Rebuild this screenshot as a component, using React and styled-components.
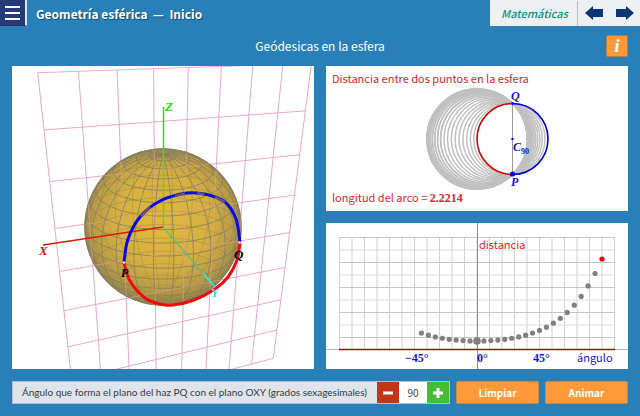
import React, { useState } from "react";
import styled, { createGlobalStyle } from "styled-components";

const sans = '"Noto Sans CJK SC", "Noto Sans", sans-serif';
const serif = '"Liberation Serif", "Times New Roman", serif';

const GlobalStyle = createGlobalStyle`
  * { box-sizing: border-box; }
  body { margin: 0; background: #2980b9; font-family: ${sans}; }
  button, input { font-family: inherit; margin: 0; padding: 0; border: 0; border-radius: 0; }
`;

const Page = styled.div`
  display: flex;
  flex-direction: column;
  background: #2980b9;
`;

const TopBar = styled.header`
  display: flex;
  align-items: stretch;
  height: 26px;
`;

const MenuButton = styled.button`
  display: grid;
  place-items: center;
  width: 27px;
  background: #253a78;
  border-right: 2px solid #d5e6f2;
  border-bottom: 1px solid #1d2f66;
`;

const PageTitle = styled.h1`
  flex: 1;
  margin: 0;
  padding-left: 9px;
  color: #fff;
  font-size: 12px;
  line-height: 28px;
  font-weight: 700;
  white-space: pre;
  text-shadow: 1px 1px 1px #174a6e;
`;

const Navigation = styled.nav`
  display: flex;
  align-items: center;
  width: 150px;
  padding-left: 11px;
  background: #ecf0f1;
`;

const SubjectLink = styled.a`
  flex: 1;
  color: #149184;
  font-size: 11px;
  line-height: 24px;
  font-style: italic;
  font-weight: 500;
  text-decoration: none;
`;

const NavButtons = styled.div`
  display: flex;
  gap: 12px;
  padding: 2px 6px 2px 6px;
  border-left: 1px solid #a3c3e6;
`;

const NavButton = styled.button`
  display: grid;
  place-items: center;
  width: 19px;
  height: 21px;
  background: transparent;
`;

const SceneHeader = styled.div`
  display: grid;
  grid-template-columns: 22px 1fr 22px;
  align-items: center;
  height: 40px;
  padding: 0 12px;
`;

const SceneTitle = styled.h2`
  grid-column: 2;
  margin: 0;
  color: #fff;
  font-size: 12px;
  line-height: 20px;
  font-weight: 400;
  text-align: center;
`;

const InfoButton = styled.button`
  height: 22px;
  background: #ff993a;
  border: 1px solid #b98046;
  border-radius: 2px;
  color: #fff;
  font: italic 700 18px/18px ${serif};
`;

const Scenes = styled.main`
  display: grid;
  grid-template-columns: 1fr 1fr;
  gap: 12px;
  padding: 0 12px;
`;

const Column = styled.div`
  display: flex;
  flex-direction: column;
  gap: 12px;
`;

const Drawing = styled.svg`
  display: block;
  width: 100%;
  background: #fff;
`;

const Controls = styled.form`
  display: grid;
  grid-template-columns: minmax(0, 1fr) 83px 83px;
  gap: 6px;
  padding: 12px 12px;
`;

const Stepper = styled.div`
  display: flex;
  height: 23px;
  border: 1px solid #aebfce;
`;

const StepperLabel = styled.label`
  flex: 1;
  padding-left: 9px;
  background: #dfe4ea;
  color: #343b42;
  font-family: Lato, ${sans};
  font-size: 10px;
  line-height: 20px;
  white-space: nowrap;
`;

const StepButton = styled.button`
  display: grid;
  place-items: center;
  width: 22px;
  background: ${(p) => p.$color};
`;

const StepInput = styled.input`
  width: 28px;
  background: #fff;
  color: #444;
  font-size: 10px;
  text-align: center;
`;

const ActionButton = styled.button`
  height: 23px;
  background: #ff993a;
  border: 1px solid #c08a50;
  border-radius: 2px;
  color: #fff;
  font-size: 10px;
  line-height: 20px;
  font-weight: 700;
`;

const SansText = styled.text`
  font-family: ${sans};
  font-size: ${(p) => p.$size || 12}px;
  fill: ${(p) => p.$color};
`;

const SerifText = styled.text`
  font-family: ${serif};
  font-size: ${(p) => p.$size || 12}px;
  font-weight: 700;
  font-style: ${(p) => (p.$italic ? "italic" : "normal")};
  fill: ${(p) => p.$color};
`;

const SerifSpan = styled.tspan`
  font-family: ${serif};
  font-size: 12px;
  font-weight: 700;
`;

const range = (n) => Array.from({ length: n }, (_, i) => i);
const rad = (deg) => (deg * Math.PI) / 180;
const toPath = (pts) => "M" + pts.map((p) => p[0].toFixed(1) + " " + p[1].toFixed(1)).join("L");

/* Perspective mapping of the unit square onto the reference plane. */
const planePoint = (() => {
  const [a, b, c, d] = [[37.7, 72.7], [311.5, 63.3], [273.3, 358.3], [75, 411]];
  const sx = a[0] - b[0] + c[0] - d[0];
  const sy = a[1] - b[1] + c[1] - d[1];
  const dx1 = b[0] - c[0], dx2 = d[0] - c[0];
  const dy1 = b[1] - c[1], dy2 = d[1] - c[1];
  const det = dx1 * dy2 - dx2 * dy1;
  const g = (sx * dy2 - dx2 * sy) / det;
  const h = (dx1 * sy - sx * dy1) / det;
  return (u, v) => {
    const w = g * u + h * v + 1;
    return [
      ((b[0] - a[0] + g * b[0]) * u + (d[0] - a[0] + h * d[0]) * v + a[0]) / w,
      ((b[1] - a[1] + g * b[1]) * u + (d[1] - a[1] + h * d[1]) * v + a[1]) / w,
    ];
  };
})();

const planeLines = range(9)
  .map((i) => toPath([planePoint(i / 8, 0), planePoint(i / 8, 1)]) + toPath([planePoint(0, i / 8), planePoint(1, i / 8)]))
  .join("");

/* Projects a sphere point and reports whether it faces the viewer. */
const project = (lat, lon) => {
  const turn = rad(lon);
  const x = Math.cos(rad(lat)) * Math.sin(turn);
  const depth = Math.cos(rad(lat)) * Math.cos(turn);
  const z = Math.sin(rad(lat));
  const e = rad(22);
  return [163 + 78 * x, 227 - 78 * (z * Math.cos(e) - depth * Math.sin(e)), depth * Math.cos(e) + z * Math.sin(e)];
};

const wire = (front) => {
  const out = [];
  const add = (p, q) => {
    if (p[2] + q[2] >= 0 === front) out.push(toPath([p, q]));
  };
  for (let lat = -80; lat <= 80; lat += 10)
    for (let lon = 8; lon < 368; lon += 15) add(project(lat, lon), project(lat, lon + 15));
  for (let lon = 8; lon < 368; lon += 15)
    for (let lat = -90; lat < 90; lat += 10) add(project(lat, lon), project(lat + 10, lon));
  return out.join("");
};
const frontWire = wire(true);
const backWire = wire(false);

const smooth = (pts) => {
  let d = `M${pts[0]}`;
  for (let i = 0; i < pts.length - 1; i++) {
    const p0 = pts[i - 1] || pts[i], p1 = pts[i], p2 = pts[i + 1], p3 = pts[i + 2] || p2;
    d += `C${p1[0] + (p2[0] - p0[0]) / 6} ${p1[1] + (p2[1] - p0[1]) / 6} ${p2[0] - (p3[0] - p1[0]) / 6} ${p2[1] - (p3[1] - p1[1]) / 6} ${p2[0]} ${p2[1]}`;
  }
  return d;
};
const blueArc = smooth([[124, 262], [128, 239], [140, 217], [160, 201], [187, 193], [207, 194.5], [225, 202], [236, 219], [240, 242]]);
const redArc = smooth([[240, 243], [237, 260], [228, 277], [215, 289], [194, 300], [173, 305], [160, 304], [145, 298], [130, 281], [124, 263]]);

function SphereScene() {
  return (
    <Drawing viewBox="12 66 302 303" role="img" aria-label="Esfera">
      <defs>
        <radialGradient id="gold" cx="0.5" cy="0.46" r="0.54">
          <stop offset="0" stopColor="#e0b93c" />
          <stop offset="0.55" stopColor="#d6b040" />
          <stop offset="0.82" stopColor="#b99d46" />
          <stop offset="1" stopColor="#92834a" />
        </radialGradient>
        <clipPath id="ball"><circle cx="163" cy="227" r="78" /></clipPath>
      </defs>
      <path d={planeLines} fill="none" stroke="#e9a8cd" />
      <circle cx="163" cy="227" r="78.5" fill="url(#gold)" />
      <path d={backWire} fill="none" stroke="#9a8440" strokeWidth="0.7" opacity="0.6" />
      <path d={frontWire} fill="none" stroke="#857d62" strokeWidth="0.8" />
      <circle cx="163" cy="227" r="78" fill="none" stroke="#85805f" strokeWidth="1.6" />
      <path d={planeLines} fill="none" stroke="#e8a08c" clipPath="url(#ball)" opacity="0.6" />
      <path d="M163 227L43 245" stroke="#d61a08" strokeWidth="1.3" />
      <path d="M163 227L203 273" stroke="#4fbf8d" strokeWidth="1.2" />
      <path d="M163.5 227V148" stroke="#62d31c" strokeWidth="1.4" />
      <path d="M163.5 149V107" stroke="#19e619" strokeWidth="1.5" />
      <path d={blueArc} fill="none" stroke="#0a0ae6" strokeWidth="3" />
      <path d="M141 216L150 207M175 196L185 193.5M197 193L204 194.5M215 197L225 202" stroke="#655274" strokeWidth="2.6" />
      <path d={redArc} fill="none" stroke="#f40808" strokeWidth="3" />
      <path d="M203 273L215 287" stroke="#20eee0" strokeWidth="1.8" />
      <circle cx="124" cy="262.5" r="1.3" fill="#e8d8f0" />
      <circle cx="239.5" cy="242.5" r="1.3" fill="#e8d8f0" />
      <SerifText x="165" y="111" $italic $color="#19dc19" $size={13}>Z</SerifText>
      <SerifText x="39" y="255" $italic $color="#e01414" $size={13}>X</SerifText>
      <SerifText x="211" y="297" $italic $color="#17e8e8" $size={12}>Y</SerifText>
      <SerifText x="121" y="277" $italic $color="#000" $size={12}>P</SerifText>
      <SerifText x="234" y="259" $italic $color="#000" $size={13}>Q</SerifText>
    </Drawing>
  );
}

const angles = range(27).map((i) => -40 + i * 5);

function CirclesScene() {
  return (
    <Drawing viewBox="326 66 302 145" role="img" aria-label="Distancia entre dos puntos en la esfera">
      {angles.map((t) => {
        const d = 35.5 * Math.cos(rad(t));
        return <circle key={t} cx={512.5 - d} cy="139" r={Math.hypot(d, 35.5)} fill="none" stroke="#c0c0c0" strokeWidth="1.5" />;
      })}
      <path d="M512.5 103.5V174.5" stroke="#999" />
      <path d="M512.5 103.5A35.5 35.5 0 0 0 512.5 174.5" fill="none" stroke="#e00000" strokeWidth="1.5" />
      <path d="M512.5 103.5A35.5 35.5 0 0 1 512.5 174.5" fill="none" stroke="#0000e0" strokeWidth="1.5" />
      <circle cx="512.5" cy="139" r="1.2" fill="#0000e0" />
      <circle cx="512.5" cy="174" r="2.6" fill="#0000e0" />
      <circle cx="512.5" cy="103.5" r="1.4" fill="#0000e0" />
      <SansText x="332" y="83" $color="#e0262c" $size={11}>Distancia entre dos puntos en la esfera</SansText>
      <SansText x="332" y="202" $color="#e0262c" $size={11}>
        longitud del arco = <SerifSpan>2.2214</SerifSpan>
      </SansText>
      <SerifText x="511" y="100" $italic $color="#1414e0">Q</SerifText>
      <SerifText x="511" y="186" $italic $color="#1414e0">P</SerifText>
      <SerifText x="513" y="151" $italic $color="#1414e0">C</SerifText>
      <SerifText x="521" y="154" $color="#1414e0" $size={8}>90</SerifText>
    </Drawing>
  );
}

const arcLength = (t) => {
  const r = Math.sqrt(0.5 + 0.5 * Math.cos(rad(t)) ** 2);
  return 2 * r * Math.asin(Math.min(1, Math.SQRT1_2 / r));
};

function ChartScene() {
  return (
    <Drawing viewBox="326 223 302 146" role="img" aria-label="Distancia según el ángulo">
      {range(23).map((i) => (
        <path key={i} d={`M${339.5 + i * 12.5} 237V349`} stroke="#ccc" strokeWidth="0.9" />
      ))}
      {range(9).map((i) => (
        <path key={i} d={`M339 ${237.5 + i * 12.5}H615`} stroke={i % 2 ? "#dcdcdc" : "#c6c6c6"} />
      ))}
      <path d="M326 349.5H628" stroke="#a9bac0" />
      <path d="M477.5 223V369" stroke="#82929f" />
      <path d="M339 349.5H615" stroke="#b00000" strokeWidth="1.4" />
      {angles.map((t) => (
        <circle
          key={t}
          cx={477 + (t * 125) / 90}
          cy={341 - (arcLength(t) - Math.PI / 2) * 126}
          r={t === 0 ? 3.8 : 2.6}
          fill={t === 90 ? "#ee0000" : "#808080"}
        />
      ))}
      <SansText x="479" y="249" $color="#e0262c" $size={11}>distancia</SansText>
      <SerifText x="405" y="362" $color="#1414d8">−45°</SerifText>
      <SerifText x="477" y="362" $color="#1414d8">0°</SerifText>
      <SerifText x="533" y="362" $color="#1414d8">45°</SerifText>
      <SansText x="577" y="362" $color="#1414d8" $size={11}>ángulo</SansText>
    </Drawing>
  );
}

export default function App() {
  const [angle, setAngle] = useState("90");
  const step = (n) => setAngle((v) => String(Number(v) + n));
  return (
    <Page>
      <GlobalStyle />
      <TopBar>
        <MenuButton aria-label="Menú">
          <svg width="15" height="16" viewBox="0 0 15 16">
            <path d="M1 2H14M1 8H14M1 14H14" stroke="#fff" strokeWidth="2.2" strokeLinecap="square" />
          </svg>
        </MenuButton>
        <PageTitle>Geometría esférica  —  Inicio</PageTitle>
        <Navigation>
          <SubjectLink href="#matematicas">Matemáticas</SubjectLink>
          <NavButtons>
            <NavButton aria-label="Anterior">
              <svg width="18" height="16" viewBox="0 0 18 16">
                <path d="M0 8L8 1V4H18V12H8V15Z" fill="#0b3672" />
              </svg>
            </NavButton>
            <NavButton aria-label="Siguiente">
              <svg width="18" height="16" viewBox="0 0 18 16">
                <path d="M18 8L10 1V4H0V12H10V15Z" fill="#0b3672" />
              </svg>
            </NavButton>
          </NavButtons>
        </Navigation>
      </TopBar>
      <SceneHeader>
        <SceneTitle>Geódesicas en la esfera</SceneTitle>
        <InfoButton aria-label="Información">i</InfoButton>
      </SceneHeader>
      <Scenes>
        <SphereScene />
        <Column>
          <CirclesScene />
          <ChartScene />
        </Column>
      </Scenes>
      <Controls onSubmit={(e) => e.preventDefault()}>
        <Stepper>
          <StepperLabel htmlFor="angle">Ángulo que forma el plano del haz PQ con el plano OXY (grados sexagesimales)</StepperLabel>
          <StepButton type="button" $color="#c23616" aria-label="Disminuir" onClick={() => step(-5)}>
            <svg width="12" height="12" viewBox="0 0 12 12"><path d="M1 6H11" stroke="#fff" strokeWidth="3" /></svg>
          </StepButton>
          <StepInput id="angle" value={angle} onChange={(e) => setAngle(e.target.value)} />
          <StepButton type="button" $color="#44bd32" aria-label="Aumentar" onClick={() => step(5)}>
            <svg width="12" height="12" viewBox="0 0 12 12"><path d="M1 6H11M6 1V11" stroke="#fff" strokeWidth="3" /></svg>
          </StepButton>
        </Stepper>
        <ActionButton type="button">Limpiar</ActionButton>
        <ActionButton type="button">Animar</ActionButton>
      </Controls>
    </Page>
  );
}
